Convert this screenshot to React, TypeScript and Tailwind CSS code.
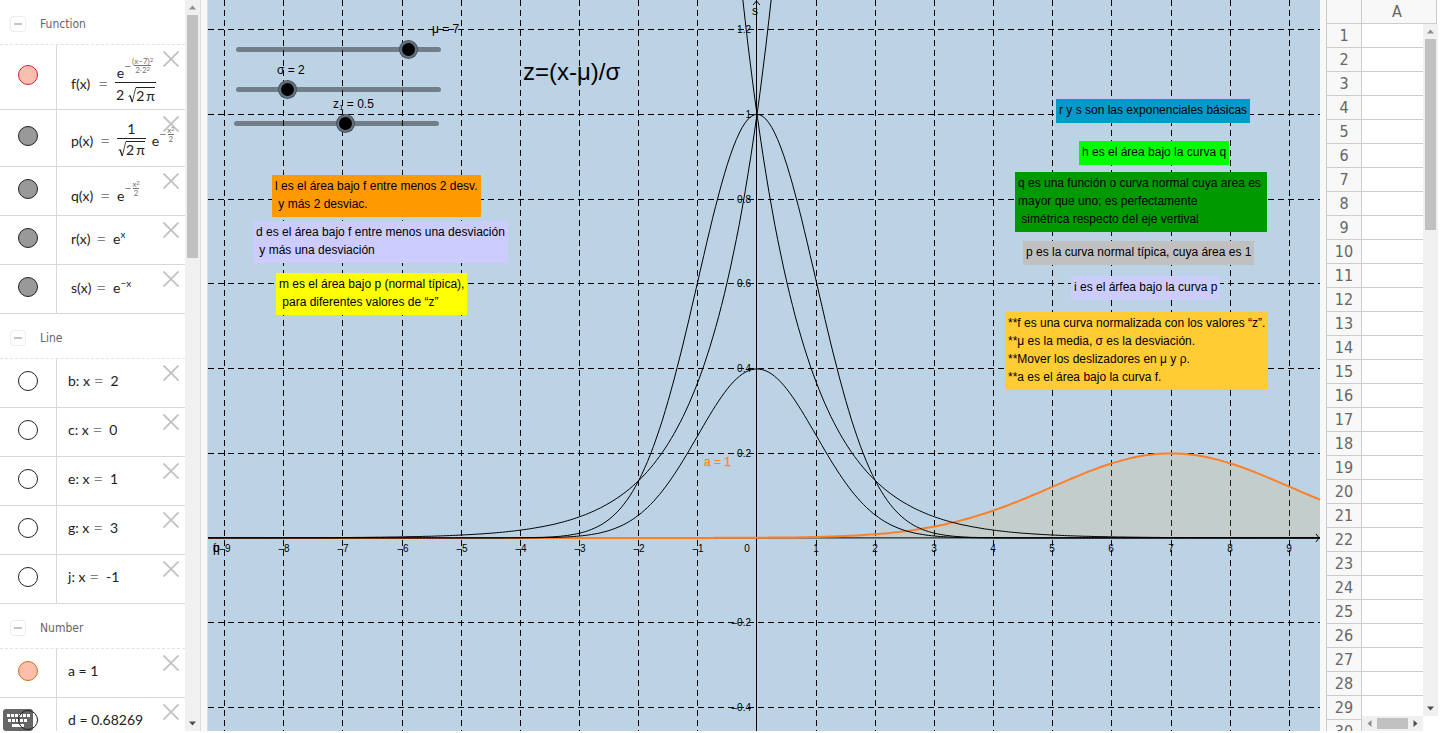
import { useState } from "react";
import type { ReactNode } from "react";
import clsx from "clsx";

const ORIGIN_X = 549;
const ORIGIN_Y = 537.9;
const UNIT_X = 59.15;
const UNIT_Y = 423.5;

const px = (x: number) => ORIGIN_X + x * UNIT_X;
const py = (y: number) => ORIGIN_Y - y * UNIT_Y;

function curve(fn: (x: number) => number, from = -10, to = 20) {
  const points: string[] = [];
  for (let x = from; x <= to; x += 0.05) {
    const y = fn(x);
    if (y < 1.6) points.push(`${px(x).toFixed(1)},${py(y).toFixed(1)}`);
  }
  return `M${points.join("L")}`;
}

const gridX = Array.from({ length: 30 }, (_, i) => i - 9);
const gridY = [1.2, 1, 0.8, 0.6, 0.4, 0.2, -0.2, -0.4];

const label = (n: number) => String(n).replace("-", "–");

function Equals({ className }: { className?: string }) {
  return <span className={clsx("inline-block w-[17px] text-lg font-light leading-4", className)}>=</span>;
}

function Frac({ num, den, className }: { num: ReactNode; den: ReactNode; className?: string }) {
  return (
    <span className={clsx("inline-flex flex-col items-center", className)}>
      <span className="flex items-end px-px">{num}</span>
      <span className="flex items-center border-t border-current px-px">{den}</span>
    </span>
  );
}

function Root({ children }: { children: ReactNode }) {
  return (
    <span className="flex h-4 items-stretch">
      <svg width="8" height="16" viewBox="0 0 8 16" fill="none" stroke="currentColor">
        <path d="M0.5 9.5L2 8.5" strokeWidth="0.8" />
        <path d="M2 8.5L4.3 15" strokeWidth="1.3" />
        <path d="M4.3 15L7.8 0.5" strokeWidth="0.8" />
      </svg>
      <span className="flex gap-0.5 border-t border-current leading-4">{children}</span>
    </span>
  );
}

function Exp({ num, den, className }: { num: ReactNode; den: ReactNode; className?: string }) {
  return (
    <span className={clsx("flex items-center text-[8px] leading-[8px] text-neutral-500", className)}>
      <span className="text-xs leading-[8px]">−</span>
      <Frac num={num} den={den} />
    </span>
  );
}

function Squared({ children }: { children: ReactNode }) {
  return (
    <>
      {children}
      <span className="mb-0.5 text-[6px] leading-[6px]">2</span>
    </>
  );
}

function Row({
  children,
  marble,
  size = "h-[49px]",
  formula = false,
}: {
  children: ReactNode;
  marble: string;
  size?: string;
  formula?: boolean;
}) {
  return (
    <li className={clsx("relative flex border-b border-[#d8d8d8]", size)}>
      <div className="flex w-[57px] shrink-0 items-center justify-center border-r border-[#d8d8d8] pb-1">
        <button
          aria-label="Show or hide"
          className={clsx("relative z-20 h-5 w-5 rounded-full border", marble)}
        />
      </div>
      <div
        className={clsx(
          "flex items-center overflow-hidden whitespace-nowrap font-['Lato',sans-serif] text-[14px] text-[#222]",
          formula ? "pb-1 pl-[14px]" : "pb-1.5 pl-[11px]",
        )}
      >
        {children}
      </div>
      <button aria-label="Delete" className="absolute right-1.5 top-1.5 text-[#c1c1c1]">
        <svg width="16" height="16" viewBox="0 0 16 16" stroke="currentColor" strokeWidth="1.8">
          <path d="M0.5 0.5L15.5 15.5M15.5 0.5L0.5 15.5" />
        </svg>
      </button>
    </li>
  );
}

function Group({ title, children }: { title: string; children: ReactNode }) {
  return (
    <section>
      <header className="flex h-[45px] items-center gap-3.5 border-b border-dashed border-[#e2e2e2] pl-2.5 pt-1">
        <button
          aria-label="Collapse"
          className="flex h-4 w-4 items-center justify-center rounded-sm border border-[#ececec]"
        >
          <span className="h-0.5 w-2 bg-[#c4c4c4]" />
        </button>
        <h2 className="font-['DejaVu_Sans_Condensed','DejaVu_Sans',sans-serif] text-xs text-[#666]">{title}</h2>
      </header>
      <ul>{children}</ul>
    </section>
  );
}

function Arrow({ direction, muted }: { direction: string; muted?: boolean }) {
  return (
    <svg
      width="15"
      height="15"
      viewBox="0 0 15 15"
      className={clsx("shrink-0", direction, muted ? "fill-[#8f8f8f]" : "fill-[#4c4f54]")}
    >
      <path d="M4 9.5L7.5 5.5L11 9.5Z" />
    </svg>
  );
}

const HOLLOW = "border-[#1d2226]";
const GREY = "border-[#1d2226] bg-[#999]";

function Line({ name, value }: { name: string; value: string }) {
  return (
    <Row marble={HOLLOW}>
      <span className="whitespace-pre">{name}: x </span>
      <Equals />
      <span>{value}</span>
    </Row>
  );
}

function Algebra({ mu, sigma }: { mu: number; sigma: number }) {
  return (
    <aside className="relative flex w-[201px] shrink-0 overflow-hidden border-r border-[#dcdcdc] bg-white">
      <div className="min-w-0 flex-1">
        <Group title="Function">
          <Row marble="border-[#d4203f] bg-[#fbc0ad]" size="h-[65px]" formula>
            <span className="mt-4 w-[27px]">f(x)</span>
            <Equals className="mt-4" />
            <Frac
              className="mt-3"
              num={
                <>
                  <span className="leading-[18px]">e</span>
                  <Exp
                    className="mb-2"
                    num={<Squared>(x−{mu})</Squared>}
                    den={<Squared>2·{sigma}</Squared>}
                  />
                </>
              }
              den={
                <span className="flex items-center gap-1 pt-px">
                  <span>{sigma}</span>
                  <Root>
                    <span>2</span>
                    <span>π</span>
                  </Root>
                </span>
              }
            />
          </Row>
          <Row marble={GREY} size="h-[57px]" formula>
            <span className="mt-2 w-[29px]">p(x)</span>
            <Equals className="mt-2" />
            <Frac
              className="mt-1"
              num={<span className="leading-[18px]">1</span>}
              den={
                <span className="pt-0.5">
                  <Root>
                    <span>2</span>
                    <span>π</span>
                  </Root>
                </span>
              }
            />
            <span className="mt-2 pl-1.5">e</span>
            <Exp className="mb-1" num={<Squared>x</Squared>} den="2" />
          </Row>
          <Row marble={GREY} formula>
            <span className="mt-3 w-[29px]">q(x)</span>
            <Equals className="mt-3" />
            <span className="mt-3">e</span>
            <Exp className="mb-0.5" num={<Squared>x</Squared>} den="2" />
          </Row>
          <Row marble={GREY} formula>
            <span className="w-[25px]">r(x)</span>
            <Equals />
            <span>e</span>
            <span className="mb-2 text-[10px]">x</span>
          </Row>
          <Row marble={GREY} formula>
            <span className="w-[25px]">s(x)</span>
            <Equals />
            <span>e</span>
            <span className="mb-2 text-[10px]">−x</span>
          </Row>
        </Group>
        <Group title="Line">
          <Line name="b" value="2" />
          <Line name="c" value="0" />
          <Line name="e" value="1" />
          <Line name="g" value="3" />
          <Line name="j" value="-1" />
        </Group>
        <Group title="Number">
          <Row marble="border-[#c9701d] bg-[#fdbfab]">a = 1</Row>
          <Row marble={HOLLOW}>d = 0.68269</Row>
        </Group>
      </div>
      <div className="flex w-[15px] flex-col bg-[#f0f0f0]">
        <Arrow direction="rotate-0" muted />
        <div className="mx-0.5 h-[243px] bg-[#c1c1c1]" />
        <div className="flex-1" />
        <Arrow direction="rotate-180" />
      </div>
      <button aria-label="Keyboard" className="absolute bottom-0 left-[3px] z-10">
        <svg width="30" height="22" viewBox="0 0 30 22">
          <rect width="30" height="22" rx="3" fill="#666" />
          <g fill="#fff">
            {[4, 8, 12, 16, 20, 24].map((x) => (
              <rect key={x} x={x} y="5" width="3" height="3" />
            ))}
            {[5, 9, 13, 17, 21].map((x) => (
              <rect key={x} x={x} y="10" width="3" height="3" />
            ))}
            <rect x="9" y="15" width="12" height="3" />
          </g>
        </svg>
      </button>
    </aside>
  );
}

function Slider({
  id,
  value,
  min,
  max,
  onChange,
  className,
}: {
  id: string;
  value: number;
  min: number;
  max: number;
  onChange: (value: number) => void;
  className: string;
}) {
  return (
    <input
      id={id}
      type="range"
      min={min}
      max={max}
      step={0.1}
      value={value}
      onChange={(e) => onChange(Number(e.target.value))}
      className={clsx(
        "absolute h-[5px] w-[205px] cursor-pointer appearance-none rounded-full bg-black/40",
        "[&::-webkit-slider-thumb]:h-[13px] [&::-webkit-slider-thumb]:w-[13px] [&::-webkit-slider-thumb]:appearance-none",
        "[&::-webkit-slider-thumb]:rounded-full [&::-webkit-slider-thumb]:bg-black",
        "[&::-webkit-slider-thumb]:shadow-[0_0_0_2px_#65717d,0_0_0_3px_#4a545e]",
        className,
      )}
    />
  );
}

function Note({ children, className }: { children: string; className: string }) {
  return (
    <p className={clsx("absolute whitespace-pre px-[3px] pb-1 pt-0.5 text-xs leading-[18px]", className)}>
      {children}
    </p>
  );
}

function Graphics({
  mu,
  sigma,
  z,
  setMu,
  setSigma,
  setZ,
}: {
  mu: number;
  sigma: number;
  z: number;
  setMu: (value: number) => void;
  setSigma: (value: number) => void;
  setZ: (value: number) => void;
}) {
  const f = curve((x) => Math.exp(-((x - mu) ** 2) / (2 * sigma ** 2)) / (sigma * Math.sqrt(2 * Math.PI)));

  return (
    <main className="relative min-w-0 flex-1 overflow-hidden bg-[#bcd3e6] font-['Liberation_Sans',Arial,sans-serif] text-black">
      <svg className="absolute inset-0 h-full w-full" fill="none" stroke="#000">
        <g strokeDasharray="6 4" shapeRendering="crispEdges">
          {gridX.map((x) => x !== 0 && <path key={x} d={`M${Math.floor(px(x)) + 0.5} 0V2000`} />)}
          {gridY.map((y) => (
            <path key={y} d={`M0 ${Math.floor(py(y)) + 0.5}H3000`} />
          ))}
        </g>
        <path d={`${f}V${ORIGIN_Y}H0Z`} fill="#ebb23f" fillOpacity="0.15" stroke="none" />
        <path d={`M0 ${ORIGIN_Y}H3000`} />
        <path d={`M${ORIGIN_X - 0.5} 0V2000`} />
        <path d={`M${ORIGIN_X - 4} 5L${ORIGIN_X - 0.5} 1L${ORIGIN_X + 3} 5`} />
        <path d={f} stroke="#ff7f27" strokeWidth="2" />
        <path d={curve((x) => Math.exp(-x * x / 2) / Math.sqrt(2 * Math.PI))} />
        <path d={curve((x) => Math.exp(-x * x / 2))} />
        <path d={curve((x) => Math.exp(x), -10, 1)} />
        <path d={curve((x) => Math.exp(-x), -1, 20)} />
        <svg x="100%" overflow="visible">
          <path d={`M-4 ${ORIGIN_Y - 4}L-1 ${ORIGIN_Y}L-4 ${ORIGIN_Y + 4}`} />
        </svg>
        <g fill="#000" stroke="none" fontSize="10" textAnchor="middle">
          {gridX.slice(0, 19).map((x) => (
            <text key={x} x={x === 0 ? px(0) - 10 : Math.floor(px(x)) + (x < 0 ? 1 : 0)} y="552">
              {label(x)}
            </text>
          ))}
          <g textAnchor="end">
            {gridY.map((y) => (
              <text key={y} x="543" y={Math.floor(py(y)) + 4}>
                {label(y)}
              </text>
            ))}
          </g>
        </g>
        <g stroke="none" fontSize="12">
          <text x="5" y="552" fill="#e00">f</text>
          <text x="5" y="552" fill="#000">p</text>
          <text x="5" y="552" fill="#000">q</text>
          <text x="544" y="15" fill="#000">s</text>
          <text x="496" y="466" fill="#ff8c00" stroke="#ff8c00" strokeWidth="0.3">a = 1</text>
        </g>
      </svg>

      <label htmlFor="mu" className="absolute left-[224px] top-[21px] text-xs">μ = {mu}</label>
      <Slider id="mu" value={mu} min={0} max={8.1} onChange={setMu} className="left-7 top-[47px]" />
      <label htmlFor="sigma" className="absolute left-[69px] top-[62px] text-xs">σ = {sigma}</label>
      <Slider id="sigma" value={sigma} min={0.5} max={6.9} onChange={setSigma} className="left-7 top-[87px]" />
      <label htmlFor="z" className="absolute left-[125px] top-[96px] text-xs">
        z<sub className="text-[8px]">1</sub> = {z}
      </label>
      <Slider id="z" value={z} min={-5} max={5.1} onChange={setZ} className="left-[26px] top-[121px]" />

      <h1 className="absolute left-[315px] top-14 text-2xl">z=(x-μ)/σ</h1>

      <Note className="left-16 top-[175px] bg-[#ff9900]">{"l es el área bajo f entre menos 2 desv.\n y más 2 desviac."}</Note>
      <Note className="left-[45px] top-[221px] bg-[#ccccff]">
        {"d es el área bajo f entre menos una desviación\n y más una desviación"}
      </Note>
      <Note className="left-[68px] top-[273px] bg-[#ffff00]">
        {"m es el área bajo p (normal típica),\n para diferentes valores de “z”"}
      </Note>
      <Note className="left-[848px] top-[99px] bg-[#0099cc]">r y s son las exponenciales básicas</Note>
      <Note className="left-[871px] top-[141px] bg-[#00ff00]">h es el área bajo la curva q</Note>
      <Note className="left-[807px] top-[172px] bg-[#009900]">
        {"q es una función o curva normal cuya area es \nmayor que uno; es perfectamente\n simétrica respecto del eje vertival"}
      </Note>
      <Note className="left-[815px] top-[241px] bg-[#c0c0c0]">p es la curva normal típica, cuya área es 1</Note>
      <Note className="left-[863px] top-[276px] bg-[#ccccff]">i es el árfea bajo la curva p</Note>
      <Note className="left-[797px] top-[312px] bg-[#ffcc33]">
        {"**f es una curva normalizada con los valores “z”.\n**μ es la media, σ es la desviación.\n**Mover los deslizadores en μ y ρ.\n**a es el área bajo la curva f."}
      </Note>
    </main>
  );
}

function Spreadsheet() {
  return (
    <aside className="relative w-[114px] shrink-0 overflow-hidden border-l border-[#ccc] bg-white">
      <table className="w-[110px] table-fixed border-separate border-spacing-0 font-['DejaVu_Sans_Condensed','DejaVu_Sans',sans-serif] text-base leading-[23px] text-[#666]">
        <thead>
          <tr className="h-6">
            <th className="w-[35px] border-b border-r border-[#ccc] bg-[#f8f8f8] p-0" />
            <th className="border-b border-r border-[#ccc] bg-[#f8f8f8] p-0 pr-1 font-normal">A</th>
          </tr>
        </thead>
        <tbody>
          {Array.from({ length: 30 }, (_, i) => (
            <tr key={i} className="h-6">
              <th className="border-b border-r border-[#ccc] bg-[#f8f8f8] p-0 font-normal">{i + 1}</th>
              <td className="border-b border-[#ccc] p-0" />
            </tr>
          ))}
        </tbody>
      </table>
      <div className="absolute bottom-[15px] right-0.5 top-6 flex w-[15px] flex-col bg-[#f0f0f0]">
        <Arrow direction="rotate-0" muted />
        <div className="mx-0.5 h-[191px] bg-[#c1c1c1]" />
        <div className="flex-1" />
        <Arrow direction="rotate-180" />
      </div>
      <div className="absolute bottom-0 left-[35px] right-[17px] flex h-[15px] bg-[#f0f0f0]">
        <Arrow direction="-rotate-90" muted />
        <div className="my-0.5 flex-1 bg-[#c1c1c1]" />
        <Arrow direction="rotate-90" />
      </div>
      <div className="absolute bottom-0 right-0 h-[15px] w-[17px] bg-white" />
    </aside>
  );
}

export default function App() {
  const [mu, setMu] = useState(7);
  const [sigma, setSigma] = useState(2);
  const [z, setZ] = useState(0.5);

  return (
    <div className="flex h-screen overflow-hidden bg-white pb-0.5">
      <Algebra mu={mu} sigma={sigma} />
      <div className="w-[7px] shrink-0 border-r border-[#dcdcdc] bg-[#f8f8f8]" />
      <Graphics mu={mu} sigma={sigma} z={z} setMu={setMu} setSigma={setSigma} setZ={setZ} />
      <div className="w-1.5 shrink-0 bg-[#f8f8f8]" />
      <Spreadsheet />
    </div>
  );
}
